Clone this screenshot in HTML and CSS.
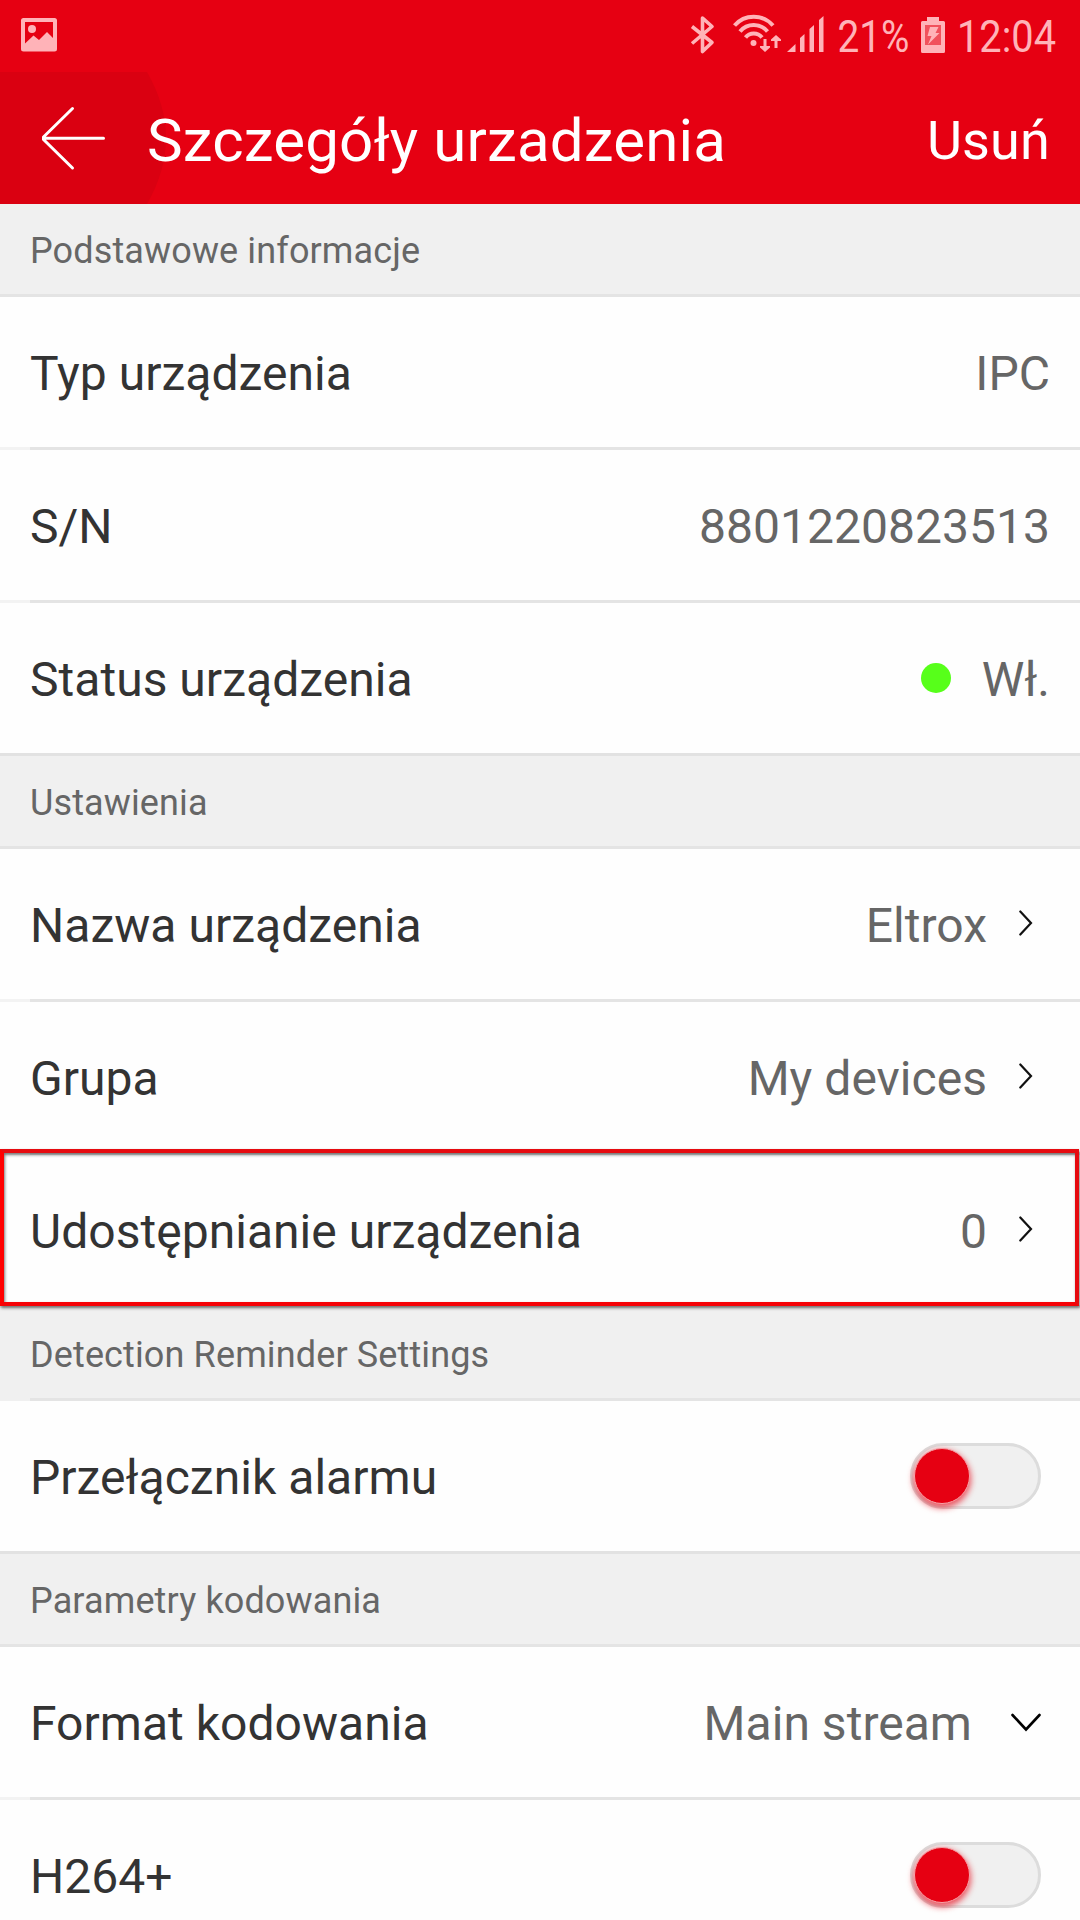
FILE: index.html
```html
<!DOCTYPE html>
<html lang="pl">
<head>
<meta charset="utf-8">
<title>Szczegóły urzadzenia</title>
<link rel="stylesheet" href="styles.css">
</head>
<body>
<div class="screen">
  <div class="statusbar">
    <svg class="status-icons" width="1080" height="72" viewBox="0 0 1080 72">
      <g class="tint">
        <path fill-rule="evenodd" d="M23.500 18h31a2.500 2.500 0 0 1 2.500 2.500v28.500a2.500 2.500 0 0 1-2.500 2.500h-31a2.500 2.500 0 0 1-2.500-2.500V20.500a2.500 2.500 0 0 1 2.500-2.500zM25 22v21.500l8.500-8 5.500 4.500 8-8 6 6V22z"/>
        <circle cx="32" cy="29" r="4"/>
      </g>
      <path class="tint-line" stroke-width="3.600" stroke-linejoin="round" d="M692 26.500l20 16-9.500 9V18l9.500 8.500-20 17"/>
      <g class="tint-line" stroke-width="4">
        <path d="M734.500 25.500a25.500 25.500 0 0 1 38.500 0"/>
        <path d="M740 31.500a18 18 0 0 1 27.500 0"/>
        <path d="M745.500 37.500a10.500 10.500 0 0 1 16.500 0"/>
      </g>
      <g class="tint">
        <circle cx="753.500" cy="43" r="3"/>
        <path d="M763.500 39h3v7h3.500v1.500l-5 4.500-5-4.500v-1.500h3.500z"/>
        <path d="M774.500 48h3v-7h3.500v-1.500l-5-4.500-5 4.500v1.500h3.500z"/>
        <path d="M787 52l8.500-8v8zM800 52V38l4.500-4v18zM809.500 52V29l4.500-4v27zM819 52V20l4.500-4v36z"/>
        <path fill-rule="evenodd" d="M927 17h12v4h4.500a1.500 1.500 0 0 1 1.500 1.500v29a1.500 1.500 0 0 1-1.500 1.500h-21a1.500 1.500 0 0 1-1.500-1.500v-29a1.500 1.500 0 0 1 1.500-1.500h4.500zM925 25v20h16V25z"/>
        <path opacity=".45" d="M925 25h16v20h-16z"/>
        <path d="M930 27h8.500l-3 6h4L928 44.500l3.500-8.500h-4z"/>
      </g>
      <text class="status-text" x="837.500" y="52" textLength="72" lengthAdjust="spacingAndGlyphs">21%</text>
      <text class="status-text" x="957" y="52" textLength="99" lengthAdjust="spacingAndGlyphs">12:04</text>
    </svg>
  </div>
  <header class="appbar">
    <svg class="back" width="168" height="132" viewBox="0 0 168 132">
      <path class="back-bg" d="M0 0H147Q185 66 147 132H0z"/>
      <path class="back-arrow" d="M72.500 36.500L43.500 65v2.500L72.500 96M44 66.300H103.500"/>
    </svg>
    <h1 class="title">Szczegóły urzadzenia</h1>
    <span class="action">Usuń</span>
  </header>

  <h2 class="section">Podstawowe informacje</h2>
  <div class="row inset"><span>Typ urządzenia</span><span class="value">IPC</span></div>
  <div class="row inset"><span>S/N</span><span class="value">8801220823513</span></div>
  <div class="row"><span>Status urządzenia</span><span class="value"><i class="dot"></i>Wł.</span></div>

  <h2 class="section">Ustawienia</h2>
  <div class="row inset"><span>Nazwa urządzenia</span><span class="value link">Eltrox</span><svg class="chevron" width="14" height="28" viewBox="0 0 14 28"><path d="M1.300 2.500L12 14 1.300 25.500"/></svg></div>
  <div class="row inset"><span>Grupa</span><span class="value link">My devices</span><svg class="chevron" width="14" height="28" viewBox="0 0 14 28"><path d="M1.300 2.500L12 14 1.300 25.500"/></svg></div>
  <div class="row highlighted"><span>Udostępnianie urządzenia</span><span class="value link">0</span><svg class="chevron" width="14" height="28" viewBox="0 0 14 28"><path d="M1.300 2.500L12 14 1.300 25.500"/></svg><div class="highlight"></div></div>

  <h2 class="section inset-line">Detection Reminder Settings</h2>
  <div class="row"><span>Przełącznik alarmu</span><span class="toggle"><i class="knob"></i></span></div>

  <h2 class="section">Parametry kodowania</h2>
  <div class="row inset"><span>Format kodowania</span><span class="value select">Main stream</span><svg class="chevron-down" width="30" height="20" viewBox="0 0 30 20"><path d="M1.500 2L15 16.500 28.500 2"/></svg></div>
  <div class="row"><span>H264+</span><span class="toggle"><i class="knob"></i></span></div>
</div>
</body>
</html>
```
FILE: styles.css
```css
* { box-sizing: border-box; }
body { margin: 0; background: #fefefe; font-family: Roboto, sans-serif; color: #333; }
.screen { width: 1080px; height: 1920px; overflow: hidden; display: flex; flex-direction: column; }
.screen > * { flex-shrink: 0; }

.statusbar { height: 72px; background: #e60012; }
.status-icons { display: block; }
.tint { fill: #ffb3b8; }
.tint-line { fill: none; stroke: #ffb3b8; }
.status-text { fill: #ffb3b8; font-size: 45px; }

.appbar { height: 132px; background: #e60012; color: #fff; display: flex; align-items: center; padding-right: 30px; }
.back { margin-right: -21px; }
.back-bg { fill: #da0011; }
.back-arrow { fill: none; stroke: #fff; stroke-width: 3; stroke-linecap: round; stroke-linejoin: round; }
.title { margin: 0; padding-top: 5px; font-size: 60px; font-weight: 400; line-height: 70px; letter-spacing: .15px; white-space: nowrap; }
.action { margin-left: auto; padding-top: 5px; font-size: 54px; line-height: 64px; letter-spacing: .15px; }

.section { margin: 0; height: 93px; padding: 2px 30px 0; background: #f0f0f0; border-bottom: 3px solid #e4e4e4; color: #666; font-size: 36px; font-weight: 400; line-height: 90px; letter-spacing: .13px; }
.inset-line { border-image: linear-gradient(to right, #f0f0f0 30px, #e4e4e4 30px) 0 0 3 0; }

.row { position: relative; height: 153px; padding: 3px 30px 0; background: #fefefe; border-bottom: 3px solid #e2e2e2; display: flex; align-items: center; font-size: 48px; line-height: 56px; letter-spacing: .03px; white-space: nowrap; }
.inset { border-image: linear-gradient(to right, #f3f3f3 30px, #e4e4e4 30px) 0 0 3 0; }
.value { margin-left: auto; color: #666; display: flex; align-items: center; }
.dot { width: 30px; height: 30px; margin: -3px 31px 0 0; border-radius: 50%; background: #57ff1a; }

.chevron { margin: -5px 17px 0 32px; fill: none; stroke: #111; stroke-width: 2.2; stroke-linecap: round; }
.chevron-down { margin: -2px 9px 0 39px; fill: none; stroke: #000; stroke-width: 2.6; stroke-linecap: round; }

.toggle { width: 131px; height: 66px; margin: -3px 9px 0 auto; padding: 2px; border: 3px solid #dcdcdc; border-radius: 33px; background: #f0f0f0; }
.knob { display: block; width: 56px; height: 56px; margin-left: -1px; border-radius: 50%; background: #e60012; border: 1px solid #f7a3a8; box-shadow: 0 3px 6px 1px rgba(230, 0, 18, .65); }

.highlight { position: absolute; left: 0; top: -6px; width: 1079px; height: 157px; border: 4px solid; border-color: #e60b10 #e60b10 #f50307 #f00; box-shadow: 1px 2px 3px rgba(0, 0, 0, .5), inset 1px 2px 3px rgba(0, 0, 0, .5); }
.highlighted { z-index: 1; }
```
